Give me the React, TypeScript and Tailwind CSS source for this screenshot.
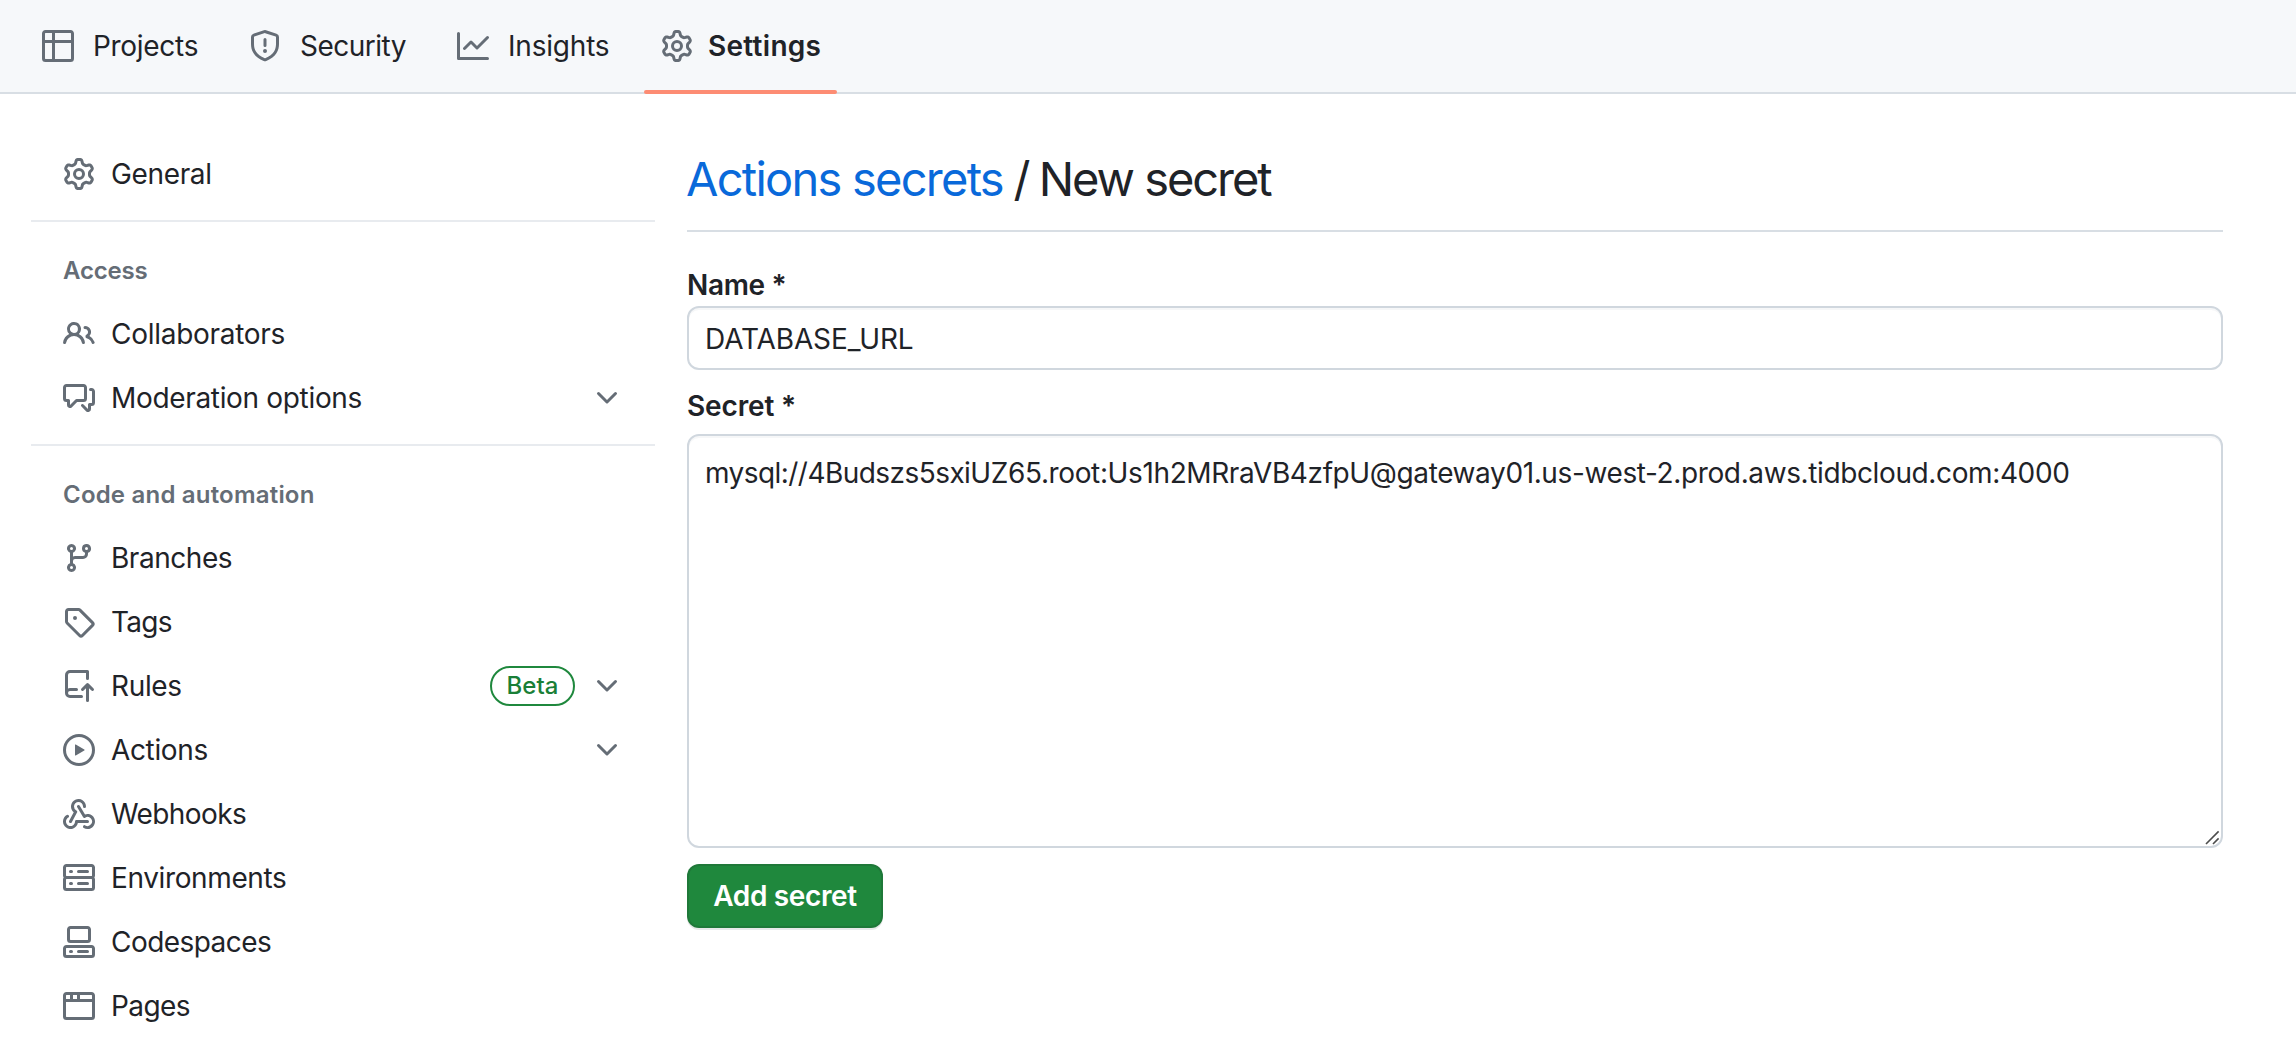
import type { ReactNode } from "react";

const icons = {
  table:
    "M0 1.75C0 .784.784 0 1.75 0h12.5C15.216 0 16 .784 16 1.75v12.5A1.75 1.75 0 0 1 14.25 16H1.75A1.75 1.75 0 0 1 0 14.25ZM6.5 6.5v8h7.75a.25.25 0 0 0 .25-.25V6.5Zm8-1.5V1.75a.25.25 0 0 0-.25-.25H6.5V5Zm-13 1.5v7.75c0 .138.112.25.25.25H5v-8ZM5 5V1.5H1.75a.25.25 0 0 0-.25.25V5Z",
  shield:
    "M7.467.133a1.748 1.748 0 0 1 1.066 0l5.25 1.68A1.75 1.75 0 0 1 15 3.48V7c0 1.566-.32 3.182-1.303 4.682-.983 1.498-2.585 2.813-5.032 3.855a1.697 1.697 0 0 1-1.33 0c-2.447-1.042-4.049-2.357-5.032-3.855C1.32 10.182 1 8.566 1 7V3.48a1.75 1.75 0 0 1 1.217-1.667Zm.61 1.429a.25.25 0 0 0-.153 0l-5.25 1.68a.25.25 0 0 0-.174.238V7c0 1.358.275 2.666 1.057 3.86.784 1.194 2.121 2.34 4.366 3.297a.196.196 0 0 0 .154 0c2.245-.956 3.582-2.104 4.366-3.298C13.225 9.666 13.5 8.36 13.5 7V3.48a.251.251 0 0 0-.174-.237l-5.25-1.68ZM8.75 4.75v3a.75.75 0 0 1-1.5 0v-3a.75.75 0 0 1 1.5 0ZM9 10.5a1 1 0 1 1-2 0 1 1 0 0 1 2 0Z",
  graph:
    "M1.5 1.75V13.5h13.75a.75.75 0 0 1 0 1.5H.75a.75.75 0 0 1-.75-.75V1.75a.75.75 0 0 1 1.5 0Zm14.28 2.53-5.25 5.25a.75.75 0 0 1-1.06 0L7 7.06 4.28 9.78a.751.751 0 0 1-1.042-.018.751.751 0 0 1-.018-1.042l3.25-3.25a.75.75 0 0 1 1.06 0L10 7.94l4.72-4.72a.751.751 0 0 1 1.042.018.751.751 0 0 1 .018 1.042Z",
  gear:
    "M8 0a8.2 8.2 0 0 1 .701.031C9.444.095 9.99.645 10.16 1.29l.288 1.107c.018.066.079.158.212.224.231.114.454.243.668.386.123.082.233.09.299.071l1.103-.303c.644-.176 1.392.021 1.82.63.27.385.506.792.704 1.218.315.675.111 1.422-.364 1.891l-.814.806c-.049.048-.098.147-.088.294.016.257.016.515 0 .772-.01.147.038.246.088.294l.814.806c.475.469.679 1.216.364 1.891a7.977 7.977 0 0 1-.704 1.217c-.428.61-1.176.807-1.82.63l-1.102-.302c-.067-.019-.177-.011-.3.071a5.909 5.909 0 0 1-.668.386c-.133.066-.194.158-.211.224l-.29 1.106c-.168.646-.715 1.196-1.458 1.26a8.006 8.006 0 0 1-1.402 0c-.743-.064-1.289-.614-1.458-1.26l-.289-1.106c-.018-.066-.079-.158-.212-.224a5.738 5.738 0 0 1-.668-.386c-.123-.082-.233-.09-.299-.071l-1.103.303c-.644.176-1.392-.021-1.82-.63a8.12 8.12 0 0 1-.704-1.218c-.315-.675-.111-1.422.363-1.891l.815-.806c.05-.048.098-.147.088-.294a6.214 6.214 0 0 1 0-.772c.01-.147-.038-.246-.088-.294l-.815-.806C.635 6.045.431 5.298.746 4.623a7.92 7.92 0 0 1 .704-1.217c.428-.61 1.176-.807 1.82-.63l1.102.302c.067.019.177.011.3-.071.214-.143.437-.272.668-.386.133-.066.194-.158.211-.224l.29-1.106C6.009.645 6.556.095 7.299.03 7.53.01 7.764 0 8 0Zm-.571 1.525c-.036.003-.108.036-.137.146l-.289 1.105c-.147.561-.549.967-.998 1.189-.173.086-.34.183-.5.29-.417.278-.97.423-1.529.27l-1.103-.303c-.109-.03-.175.016-.195.045-.22.312-.412.644-.573.99-.014.031-.021.11.059.19l.815.806c.411.406.562.957.53 1.456a4.709 4.709 0 0 0 0 .582c.032.499-.119 1.05-.53 1.456l-.815.806c-.081.08-.073.159-.059.19.162.346.353.677.573.989.02.03.085.076.195.046l1.102-.303c.56-.153 1.113-.008 1.53.27.161.107.328.204.501.29.447.222.85.629.997 1.189l.289 1.105c.029.109.101.143.137.146a6.6 6.6 0 0 0 1.142 0c.036-.003.108-.036.137-.146l.289-1.105c.147-.561.549-.967.998-1.189.173-.086.34-.183.5-.29.417-.278.97-.423 1.529-.27l1.103.303c.109.029.175-.016.195-.045.22-.313.411-.644.573-.99.014-.031.021-.11-.059-.19l-.815-.806c-.411-.406-.562-.957-.53-1.456a4.709 4.709 0 0 0 0-.582c-.032-.499.119-1.05.53-1.456l.815-.806c.081-.08.073-.159.059-.19a6.464 6.464 0 0 0-.573-.989c-.02-.03-.085-.076-.195-.046l-1.102.303c-.56.153-1.113.008-1.53-.27a4.44 4.44 0 0 0-.501-.29c-.447-.222-.85-.629-.997-1.189l-.289-1.105c-.029-.11-.101-.143-.137-.146a6.6 6.6 0 0 0-1.142 0ZM11 8a3 3 0 1 1-6 0 3 3 0 0 1 6 0ZM9.5 8a1.5 1.5 0 1 0-3.001.001A1.5 1.5 0 0 0 9.5 8Z",
  people:
    "M2 5.5a3.5 3.5 0 1 1 5.898 2.549 5.508 5.508 0 0 1 3.034 4.084.75.75 0 1 1-1.482.235 4 4 0 0 0-7.9 0 .75.75 0 0 1-1.482-.236A5.507 5.507 0 0 1 3.102 8.05 3.493 3.493 0 0 1 2 5.5ZM11 4a3.001 3.001 0 0 1 2.22 5.018 5.01 5.01 0 0 1 2.56 3.012.749.749 0 0 1-.885.954.752.752 0 0 1-.549-.514 3.507 3.507 0 0 0-2.522-2.372.75.75 0 0 1-.574-.73v-.352a.75.75 0 0 1 .416-.672A1.5 1.5 0 0 0 11 5.5.75.75 0 0 1 11 4Zm-5.5-.5a2 2 0 1 0-.001 3.999A2 2 0 0 0 5.5 3.5Z",
  comments:
    "M1.75 1h8.5c.966 0 1.75.784 1.75 1.75v5.5A1.75 1.75 0 0 1 10.25 10H7.061l-2.574 2.573A1.458 1.458 0 0 1 2 11.543V10h-.25A1.75 1.75 0 0 1 0 8.25v-5.5C0 1.784.784 1 1.75 1ZM1.5 2.75v5.5c0 .138.112.25.25.25h1a.75.75 0 0 1 .75.75v2.19l2.72-2.72a.749.749 0 0 1 .53-.22h3.5a.25.25 0 0 0 .25-.25v-5.5a.25.25 0 0 0-.25-.25h-8.5a.25.25 0 0 0-.25.25Zm13 2a.25.25 0 0 0-.25-.25h-.5a.75.75 0 0 1 0-1.5h.5c.966 0 1.75.784 1.75 1.75v5.5A1.75 1.75 0 0 1 14.25 12H14v1.543a1.458 1.458 0 0 1-2.487 1.03L9.22 12.28a.749.749 0 0 1 .326-1.275.749.749 0 0 1 .734.215l2.22 2.22v-2.19a.75.75 0 0 1 .75-.75h1a.25.25 0 0 0 .25-.25Z",
  branch:
    "M9.5 3.25a2.25 2.25 0 1 1 3 2.122V6A2.5 2.5 0 0 1 10 8.5H6a1 1 0 0 0-1 1v1.128a2.251 2.251 0 1 1-1.5 0V5.372a2.25 2.25 0 1 1 1.5 0v1.836A2.493 2.493 0 0 1 6 7h4a1 1 0 0 0 1-1v-.628A2.25 2.25 0 0 1 9.5 3.25Zm-6 0a.75.75 0 1 0 1.5 0 .75.75 0 0 0-1.5 0Zm8.25-.75a.75.75 0 1 0 0 1.5.75.75 0 0 0 0-1.5ZM4.25 12a.75.75 0 1 0 0 1.5.75.75 0 0 0 0-1.5Z",
  tag:
    "M1 7.775V2.75C1 1.784 1.784 1 2.75 1h5.025c.464 0 .91.184 1.238.513l6.25 6.25a1.75 1.75 0 0 1 0 2.474l-5.026 5.026a1.75 1.75 0 0 1-2.474 0l-6.25-6.25A1.752 1.752 0 0 1 1 7.775Zm1.5 0c0 .066.026.13.073.177l6.25 6.25a.25.25 0 0 0 .354 0l5.025-5.025a.25.25 0 0 0 0-.354l-6.25-6.25a.25.25 0 0 0-.177-.073H2.75a.25.25 0 0 0-.25.25ZM6 5a1 1 0 1 1 0 2 1 1 0 0 1 0-2Z",
  repoPush:
    "M1 2.5A2.5 2.5 0 0 1 3.5 0h8.75a.75.75 0 0 1 .75.75v3.5a.75.75 0 0 1-1.5 0V1.5h-8a1 1 0 0 0-1 1v6.708A2.493 2.493 0 0 1 3.5 9h3.25a.75.75 0 0 1 0 1.5H3.5a1 1 0 0 0 0 2h5.75a.75.75 0 0 1 0 1.5H3.5A2.5 2.5 0 0 1 1 11.5Zm13.23 7.79h-.001l-1.224-1.224v6.184a.75.75 0 0 1-1.5 0V9.066L10.28 10.29a.75.75 0 0 1-1.06-1.061l2.505-2.504a.75.75 0 0 1 1.06 0L15.29 9.23a.751.751 0 0 1-.018 1.042.751.751 0 0 1-1.042.018Z",
  play:
    "M8 0a8 8 0 1 1 0 16A8 8 0 0 1 8 0ZM1.5 8a6.5 6.5 0 1 0 13 0 6.5 6.5 0 0 0-13 0Zm4.879-2.773 4.264 2.559a.25.25 0 0 1 0 .428l-4.264 2.559A.25.25 0 0 1 6 10.559V5.442a.25.25 0 0 1 .379-.215Z",
  webhook:
    "M5.5 4.25a2.25 2.25 0 0 1 4.5 0 .75.75 0 0 0 1.5 0 3.75 3.75 0 1 0-6.14 2.889l-2.272 4.258a.75.75 0 0 0 1.324.706L7 7.25a.75.75 0 0 0-.309-1.015A2.25 2.25 0 0 1 5.5 4.25ZM7.364 3.607a.75.75 0 0 1 1.03.257l2.608 4.349a3.75 3.75 0 1 1-.628 6.785.75.75 0 0 1 .752-1.299 2.25 2.25 0 1 0-.033-3.88.75.75 0 0 1-1.03-.256L7.107 4.636a.75.75 0 0 1 .257-1.03ZM2.9 8.776A.75.75 0 0 1 2.625 9.8 2.25 2.25 0 1 0 6 11.75a.75.75 0 0 1 .75-.751h5.5a.75.75 0 0 1 0 1.5H7.425a3.75 3.75 0 1 1-5.55-3.998.75.75 0 0 1 1.024.274Z",
  server:
    "M1.75 1h12.5c.966 0 1.75.784 1.75 1.75v4c0 .372-.116.717-.314 1 .198.283.314.628.314 1v4a1.75 1.75 0 0 1-1.75 1.75H1.75A1.75 1.75 0 0 1 0 12.75v-4c0-.358.109-.707.314-1a1.739 1.739 0 0 1-.314-1v-4C0 1.784.784 1 1.75 1ZM1.5 2.75v4c0 .138.112.25.25.25h12.5a.25.25 0 0 0 .25-.25v-4a.25.25 0 0 0-.25-.25H1.75a.25.25 0 0 0-.25.25Zm.25 5.75a.25.25 0 0 0-.25.25v4c0 .138.112.25.25.25h12.5a.25.25 0 0 0 .25-.25v-4a.25.25 0 0 0-.25-.25ZM7 4.75A.75.75 0 0 1 7.75 4h4.5a.75.75 0 0 1 0 1.5h-4.5A.75.75 0 0 1 7 4.75ZM7.75 10h4.5a.75.75 0 0 1 0 1.5h-4.5a.75.75 0 0 1 0-1.5ZM3 4.75A.75.75 0 0 1 3.75 4h.5a.75.75 0 0 1 0 1.5h-.5A.75.75 0 0 1 3 4.75ZM3.75 10h.5a.75.75 0 0 1 0 1.5h-.5a.75.75 0 0 1 0-1.5Z",
  codespaces:
    "M0 11.25c0-.966.784-1.75 1.75-1.75h12.5c.966 0 1.75.784 1.75 1.75v3A1.75 1.75 0 0 1 14.25 16H1.75A1.75 1.75 0 0 1 0 14.25Zm2-9.5C2 .784 2.784 0 3.75 0h8.5C13.216 0 14 .784 14 1.75v5a1.75 1.75 0 0 1-1.75 1.75h-8.5A1.75 1.75 0 0 1 2 6.75Zm1.75-.25a.25.25 0 0 0-.25.25v5c0 .138.112.25.25.25h8.5a.25.25 0 0 0 .25-.25v-5a.25.25 0 0 0-.25-.25Zm-2 9.5a.25.25 0 0 0-.25.25v3c0 .138.112.25.25.25h12.5a.25.25 0 0 0 .25-.25v-3a.25.25 0 0 0-.25-.25ZM7 12.75a.75.75 0 0 1 .75-.75h4.5a.75.75 0 0 1 0 1.5h-4.5a.75.75 0 0 1-.75-.75Zm-4 0a.75.75 0 0 1 .75-.75h.5a.75.75 0 0 1 0 1.5h-.5a.75.75 0 0 1-.75-.75Z",
  browser:
    "M0 2.75C0 1.784.784 1 1.75 1h12.5c.966 0 1.75.784 1.75 1.75v10.5A1.75 1.75 0 0 1 14.25 15H1.75A1.75 1.75 0 0 1 0 13.25ZM14.5 6h-13v7.25c0 .138.112.25.25.25h12.5a.25.25 0 0 0 .25-.25Zm-6-3.5v2h6V2.75a.25.25 0 0 0-.25-.25ZM5 2.5v2h2v-2Zm-3.25 0a.25.25 0 0 0-.25.25V4.5h2v-2Z",
  chevron:
    "M12.78 5.22a.749.749 0 0 1 0 1.06l-4.25 4.25a.749.749 0 0 1-1.06 0L3.22 6.28a.749.749 0 1 1 1.06-1.06L8 8.939l3.72-3.719a.749.749 0 0 1 1.06 0Z",
};

type IconName = keyof typeof icons;

function Icon({ name }: { name: IconName }) {
  return (
    <svg viewBox="0 0 16 16" className="size-8 shrink-0 fill-[#656d76]" aria-hidden="true">
      <path d={icons[name]} />
    </svg>
  );
}

function Tab({
  icon,
  label,
  className,
  active = false,
}: {
  icon: IconName;
  label: string;
  className: string;
  active?: boolean;
}) {
  return (
    <a className={`relative flex h-full shrink-0 items-center ${className}`}>
      <Icon name={icon} />
      <span className="whitespace-nowrap">{label}</span>
      {active && <span className="absolute -bottom-0.5 -left-[17px] h-1 w-[193px] rounded-full bg-[#fd8c73]" />}
    </a>
  );
}

function NavRow({
  icon,
  label,
  tracking = "tracking-[-0.35px]",
  badge,
  expandable = false,
}: {
  icon: IconName;
  label: string;
  tracking?: string;
  badge?: string;
  expandable?: boolean;
}) {
  return (
    <li className="flex h-16 items-center pr-8 pl-8">
      <Icon name={icon} />
      <span className={`ml-4 flex-1 whitespace-nowrap ${tracking}`}>{label}</span>
      {badge && (
        <span className="mr-4 flex h-10 w-[85px] items-center justify-center rounded-full border-2 border-[#1f883d] text-2xl font-medium tracking-[0.1px] text-[#1a7f37]">
          {badge}
        </span>
      )}
      {expandable && <Icon name="chevron" />}
    </li>
  );
}

function Section({ title, tracking, children }: { title: string; tracking: string; children: ReactNode }) {
  return (
    <section className="mt-3.5 border-t-2 border-[#e8ebef]">
      <h3 className={`flex h-20 items-center pt-[17px] pl-8 text-2xl font-semibold text-[#656d76] ${tracking}`}>{title}</h3>
      <ul>{children}</ul>
    </section>
  );
}

export default function App() {
  return (
    <div className="flex h-[1042px] w-[2296px] flex-col overflow-hidden bg-white font-['Inter',sans-serif] text-[28px] leading-10 text-[#1f2328]">
      <header className="flex h-[94px] shrink-0 items-center border-b-2 border-[#d8dee4] bg-[#f6f8fa] pl-[42px]">
        <Tab icon="table" label="Projects" className="w-[207px] gap-[19px] tracking-[-0.3px]" />
        <Tab icon="shield" label="Security" className="w-[208px] gap-[19px] tracking-[-0.5px]" />
        <Tab icon="graph" label="Insights" className="w-[204px] gap-[19px] tracking-[-0.2px]" />
        <Tab icon="gear" label="Settings" className="gap-[15px] font-semibold tracking-[0.28px]" active />
      </header>

      <div className="flex pl-[31px]">
        <aside className="w-[624px] shrink-0 pt-12">
          <ul>
            <NavRow icon="gear" label="General" />
          </ul>
          <Section title="Access" tracking="tracking-[-0.2px]">
            <NavRow icon="people" label="Collaborators" tracking="tracking-[-0.28px]" />
            <NavRow icon="comments" label="Moderation options" tracking="tracking-[-0.33px]" expandable />
          </Section>
          <Section title="Code and automation" tracking="tracking-[0.2px]">
            <NavRow icon="branch" label="Branches" tracking="tracking-[-0.45px]" />
            <NavRow icon="tag" label="Tags" tracking="tracking-[-0.7px]" />
            <NavRow icon="repoPush" label="Rules" badge="Beta" expandable />
            <NavRow icon="play" label="Actions" expandable />
            <NavRow icon="webhook" label="Webhooks" tracking="tracking-[-0.6px]" />
            <NavRow icon="server" label="Environments" tracking="tracking-[-0.38px]" />
            <NavRow icon="codespaces" label="Codespaces" tracking="tracking-[-0.55px]" />
            <NavRow icon="browser" label="Pages" tracking="tracking-[-0.6px]" />
          </Section>
        </aside>

        <main className="ml-8 w-[1536px] shrink-0 pt-12">
          <h1 className="flex h-[90px] items-start border-b-2 border-[#d8dee4] pt-[5px] text-[47px] leading-[64px] whitespace-pre">
            <span className="-ml-px tracking-[-1.75px] text-[#0969da]">Actions secrets</span>
            <span className="tracking-[-2.5px]"> / </span>
            <span className="tracking-[-2.05px]">New secret</span>
          </h1>

          <form className="flex flex-col items-start">
            <label className="mt-[33px] font-semibold tracking-[-0.35px]">Name *</label>
            <div className="mt-px flex h-16 w-full items-center rounded-xl border-2 border-[#d0d7de] px-4 pt-px tracking-[-0.12px] shadow-[inset_0_2px_0_rgba(208,215,222,0.2)]">
              DATABASE_URL
            </div>
            <label className="mt-4 font-semibold tracking-[-0.15px]">Secret *</label>
            <div className="relative mt-2 h-[414px] w-full rounded-xl border-2 border-[#d0d7de] px-4 pt-[17px] tracking-[-0.38px] whitespace-nowrap shadow-[inset_0_2px_0_rgba(208,215,222,0.2)]">
              <span className="tracking-[-0.55px]">mysql://4Budszs5sxi</span>
              <span>UZ65.root:Us1h2MRraVB4zfpU@gateway01.us-west-2.prod.aws.tidbcloud.com:4000</span>
              <svg
                viewBox="0 0 16 16"
                className="absolute right-0 bottom-0 size-4 fill-none stroke-[#4d4d4d] stroke-[1.6]"
                aria-hidden="true"
              >
                <path d="M1 14 13.6 1.4M8 14l5.6-5.6" />
              </svg>
            </div>
            <button
              type="button"
              className="mt-4 flex h-16 w-[196px] items-center justify-center rounded-xl border-2 border-[#1f2328]/15 bg-[#1f883d] bg-clip-border font-semibold tracking-[-0.35px] text-white shadow-[0_2px_0_rgba(31,35,40,0.1)]"
            >
              Add secret
            </button>
          </form>
        </main>
      </div>
    </div>
  );
}
